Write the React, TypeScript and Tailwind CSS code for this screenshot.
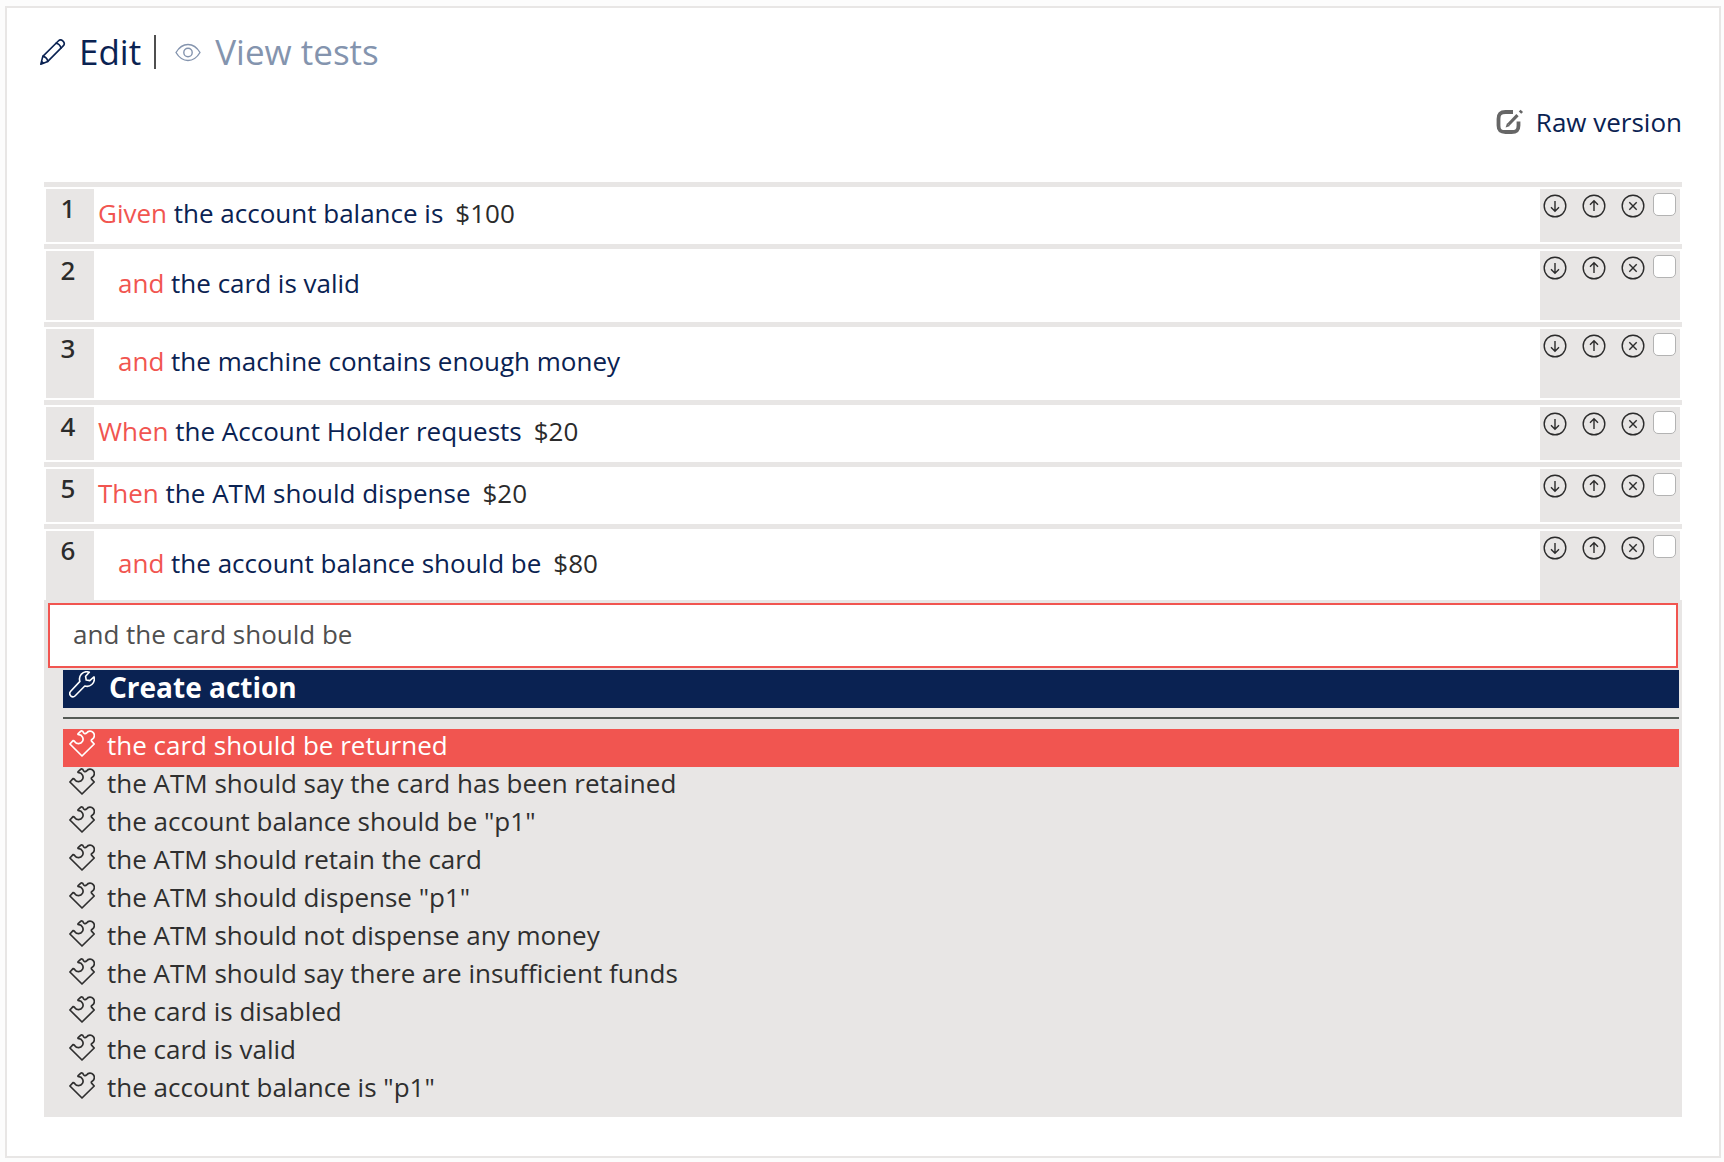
import { useState, type ReactNode } from "react";

type Step = { keyword: string; text: string; value?: string; nested?: boolean };

const steps: Step[] = [
  { keyword: "Given", text: "the account balance is", value: "$100" },
  { keyword: "and", text: "the card is valid", nested: true },
  { keyword: "and", text: "the machine contains enough money", nested: true },
  { keyword: "When", text: "the Account Holder requests", value: "$20" },
  { keyword: "Then", text: "the ATM should dispense", value: "$20" },
  { keyword: "and", text: "the account balance should be", value: "$80", nested: true },
];

const suggestions = [
  "the card should be returned",
  "the ATM should say the card has been retained",
  'the account balance should be "p1"',
  "the ATM should retain the card",
  'the ATM should dispense "p1"',
  "the ATM should not dispense any money",
  "the ATM should say there are insufficient funds",
  "the card is disabled",
  "the card is valid",
  'the account balance is "p1"',
];

function Line({ children, className, width = 1.6 }: { children: ReactNode; className: string; width?: number }) {
  return (
    <svg
      viewBox="0 0 26 27"
      className={className}
      fill="none"
      stroke="currentColor"
      strokeWidth={width}
      strokeLinejoin="round"
      strokeLinecap="round"
      aria-hidden="true"
    >
      {children}
    </svg>
  );
}

const PencilIcon = () => (
  <Line className="h-[27px] w-[26px] shrink-0">
    <path d="M.8 25.2 2.8 17.4 18.3 2c1.4-1.4 3.3-1.2 4.7.1 1.5 1.5 1.6 3.4.2 4.8L7.8 22.4Z" />
    <path d="M2.8 17.4c2.4.3 4.4 2.3 5 5M16 4.3c2.5.3 4.3 2.2 4.9 4.9M2 22.8l1.3 1.3" />
  </Line>
);

const EyeIcon = () => (
  <Line className="h-[27px] w-[26px] shrink-0" width={1.4}>
    <path d="M1 13.500C4 8.500 8 5.500 13 5.500s9 3 12 8c-3 5-7 8-12 8s-9-3-12-8Z" />
    <circle cx="13" cy="13.5" r="4.2" />
  </Line>
);

const WrenchIcon = () => (
  <Line className="h-[27px] w-[26px] shrink-0">
    <path d="M20.3 1.2c-3-1-6.2 0-8.200 2.200-1.700 2-2 4.500-1.200 7L1.700 20.300c-1.200 1.300-1.200 3.200 0 4.500 1.300 1.200 3.200 1.200 4.500-.1l9.600-9.700c2.500.8 5 .3 7-1.500 2.200-2 3-5 2.200-7.600L20.800 9.600l-3.600-.6-.6-3.700Z" />
  </Line>
);

const PuzzleIcon = () => (
  <Line className="h-[27px] w-[26px] shrink-0" width={1.7}>
    <path d="M.9 14 4 10.700C5 10.500 5.200 11 5.800 11.700A4.500 4.500 0 1 0 9.800 4.700C8.900 4.500 8.700 4.200 9.200 3.700L11.300 1.600C12.500.5 13.900.9 14.200 2.200 14.500 3.700 16.500 4.200 17.600 2.900A4.300 4.300 0 1 1 23.200 9.200C21.800 10 22.300 11 23 11.600L25.200 14 13 26Z" />
  </Line>
);

const ComposeIcon = () => (
  <svg viewBox="0 0 28 26" className="h-[26px] w-[28px] shrink-0" fill="none" stroke="#666" aria-hidden="true">
    <path d="M17 3H9.500C4.500 3 2.500 5 2.500 10v6.500c0 5 2 6.500 7 6.500h6c5 0 7-1.500 7-6.500V12.500" strokeWidth="3.8" />
    <path d="m12.500 15.500 9-9.300" strokeWidth="3.2" />
    <path d="m24 3.700 1.800-1.900" strokeWidth="3.4" />
    <path d="m9.600 18.600 1.500-4.500 2.900 2.800Z" fill="#666" stroke="none" />
  </svg>
);

const actionPaths = {
  down: "M12 7v10M8 13.200l4 4 4-4",
  up: "M12 17V7M8 10.800l4-4 4 4",
  remove: "m8.300 8.300 7.400 7.400M15.700 8.300l-7.400 7.400",
};

function ActionButton({ kind, label }: { kind: keyof typeof actionPaths; label: string }) {
  return (
    <button type="button" aria-label={label} className="size-6 shrink-0 text-[#2b2b2b]">
      <svg viewBox="0 0 24 24" className="size-6" fill="none" stroke="currentColor" strokeWidth="1.4">
        <circle cx="12" cy="12" r="10.8" />
        <path d={actionPaths[kind]} />
      </svg>
    </button>
  );
}

function StepRow({ step, index }: { step: Step; index: number }) {
  const last = index === steps.length - 1;
  const height = step.nested ? "min-h-[69px]" : "min-h-[53px]";
  return (
    <li className={`border-t-[5px] border-[#e8e6e5] pt-[2px] ${last ? "" : "pb-[2px]"}`}>
      <div className={`mx-[2px] flex items-stretch ${height}`}>
        <div className="w-12 shrink-0 bg-[#e8e6e5] pr-1 text-center font-['Noto_Sans',sans-serif] leading-[38px] font-medium text-[#2b2b2b]">
          {index + 1}
        </div>
        <div className={`flex grow items-center pb-[6px] ${step.nested ? "pl-6" : "pl-1"}`}>
          <p className="text-[#0a2252]">
            <span className="text-[#f15550]">{step.keyword}</span> {step.text}
            {step.value && <span className="ml-3 text-[#2b2b2b]">{step.value}</span>}
          </p>
        </div>
        <div className="flex w-[140px] shrink-0 items-start bg-[#e8e6e5] pt-1 pl-[3px]">
          <div className="flex gap-[15px] pt-px">
            <ActionButton kind="down" label={`Move step ${index + 1} down`} />
            <ActionButton kind="up" label={`Move step ${index + 1} up`} />
            <ActionButton kind="remove" label={`Remove step ${index + 1}`} />
          </div>
          <input
            type="checkbox"
            aria-label={`Select step ${index + 1}`}
            className="ml-2 size-[23px] appearance-none rounded-[5px] border border-[#b3b3b3] bg-white checked:bg-[#0a2252]"
          />
        </div>
      </div>
    </li>
  );
}

export default function App() {
  const [query, setQuery] = useState("and the card should be");
  return (
    <div className="min-h-screen bg-[#fcfcfc] pt-[6px] pr-[3px] pb-1 pl-[5px] font-['Open_Sans',sans-serif] text-[26px] leading-[30px]">
      <main className="border-2 border-[#e8e6e5] bg-white pt-6 pr-[37px] pb-[39px] pl-[37px]">
        <nav className="-ml-1 flex items-center text-[35px] leading-10">
          <a href="#edit" className="flex items-center gap-[13px] text-[#0a2252]">
            <PencilIcon />
            Edit
          </a>
          <span className="mr-[19px] ml-[13px] h-[34px] w-[2px] bg-[#4f4f4f]" />
          <a href="#tests" className="flex items-center gap-[14px] text-[#8494ae]">
            <EyeIcon />
            View tests
          </a>
        </nav>

        <div className="mt-[30px] flex justify-end">
          <a href="#raw" className="flex items-center gap-3 leading-10 text-[#0a2252]">
            <ComposeIcon />
            Raw version
          </a>
        </div>

        <ol className="mt-10">
          {steps.map((step, i) => (
            <StepRow key={i} step={step} index={i} />
          ))}
        </ol>

        <section className="bg-[#e8e6e5] pt-[3px] pb-2">
          <div className="mx-1">
            <input
              aria-label="New step"
              value={query}
              onChange={(e) => setQuery(e.target.value)}
              className="block h-[65px] w-full border-2 border-[#f15550] bg-white pb-1 pl-[23px] text-[#4f4f4f] outline-none"
            />
          </div>
          <div className="mt-[2px] mr-[3px] ml-[19px]">
            <button type="button" className="flex h-[38px] w-full items-start bg-[#0a2252] pt-px pl-[6px] text-left text-white">
              <WrenchIcon />
              <span className="ml-[14px] text-[28px] leading-8 font-bold">Create action</span>
            </button>
            <hr className="mt-[9px] mb-[10px] border-t-2 border-[#555a55]" />
            <ul>
              {suggestions.map((text, i) => (
                <li key={text}>
                  <button
                    type="button"
                    className={`flex h-[38px] w-full items-start pt-px pl-[6px] text-left ${i === 0 ? "bg-[#f15550] text-white" : "text-[#2f2f2f]"}`}
                  >
                    <PuzzleIcon />
                    <span className="ml-3">{text}</span>
                  </button>
                </li>
              ))}
            </ul>
          </div>
        </section>
      </main>
    </div>
  );
}
